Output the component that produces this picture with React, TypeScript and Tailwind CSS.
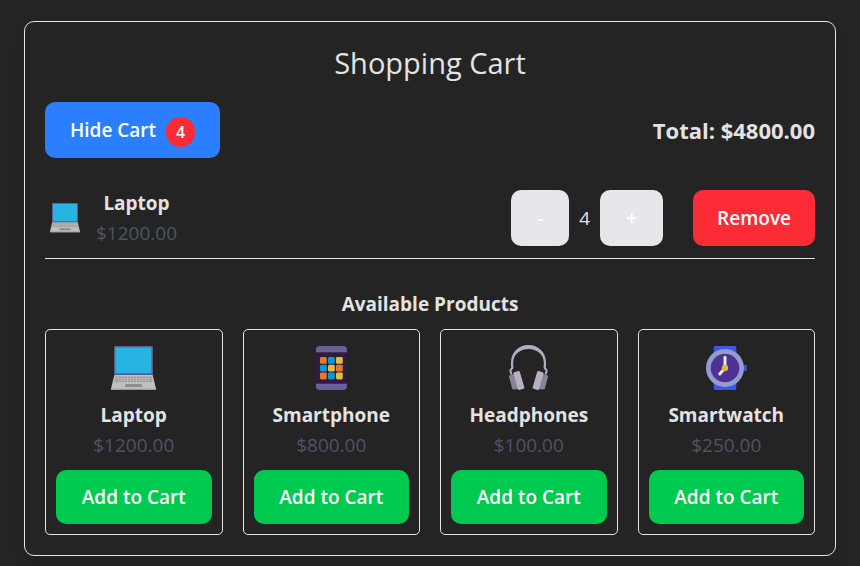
import { useState } from "react";

type IconProps = { className?: string };

function LaptopIcon({ className }: IconProps) {
  return (
    <svg viewBox="0 0 45 44" className={className} aria-hidden="true">
      <rect x="3" y="0" width="39" height="29" rx="1" fill="#635994" />
      <rect x="4.4" y="1.4" width="36" height="25.8" fill="#28b4e2" />
      <path d="M3.4 29h38.2L45 42.6V43a1 1 0 0 1-1 1H1a1 1 0 0 1-1-1v-.4z" fill="#bebebe" />
      <path d="M0 42.7h45V43a1 1 0 0 1-1 1H1a1 1 0 0 1-1-1z" fill="#9b9b9b" />
      <path d="M4.5 30.4h36l1 5.6h-38z" fill="#9b9b9b" />
      <path
        d="M7.5 30.4v5.6M10.5 30.4v5.6M13.5 30.4v5.6M16.5 30.4v5.6M19.5 30.4v5.6M22.5 30.4v5.6M25.5 30.4v5.6M28.5 30.4v5.6M31.5 30.4v5.6M34.5 30.4v5.6M37.5 30.4v5.6M4 32.3h37M4 34.2h37"
        stroke="#bebebe"
        strokeWidth=".7"
      />
      <path d="M14.6 38h15.8l.6 3H14z" fill="#8d8d8d" />
    </svg>
  );
}

const appTiles = [
  ["#e8762c", "#0899d8", "#e2be3a"],
  ["#0899d8", "#e2be3a", "#e8762c"],
  ["#e8762c", "#0899d8", "#e2be3a"],
];

function PhoneIcon({ className }: IconProps) {
  return (
    <svg viewBox="0 0 31 44" className={className} aria-hidden="true">
      <rect width="31" height="44" rx="4" fill="#6b6098" />
      <rect y="6.3" width="31" height="31.4" fill="#321b41" />
      {appTiles.map((row, r) =>
        row.map((fill, c) => (
          <rect key={`${r}-${c}`} x={4 + c * 8} y={11 + r * 7.8} width="6.8" height="6.8" rx="1.4" fill={fill} />
        )),
      )}
    </svg>
  );
}

function HeadphonesIcon({ className }: IconProps) {
  return (
    <svg viewBox="0 0 39 45" className={className} aria-hidden="true">
      <path
        d="M2 22V17.5C2 7.5 9.5 0 19.5 0S37 7.5 37 17.5V22l-2.2 1V17.5C34.8 9.6 28 4 19.5 4S4.2 9.6 4.2 17.5V23z"
        fill="#b4acbc"
      />
      <path
        d="M3.2 20v3.2l-1.7 1.900c-.6 1 .7 2 .9 4.500M35.800 20v3.200l1.700 1.900c.6 1-.7 2-.9 4.500"
        fill="none"
        stroke="#b4acbc"
        strokeWidth="2"
      />
      <path
        d="M.9 30.3 6 28.7l4 15.3-5.500.6a1.300 1.300 0 0 1-1.300-.8L.1 32a1.300 1.300 0 0 1 .8-1.700zM38.100 30.300 33 28.700l-4 15.300 5.500.6a1.300 1.300 0 0 0 1.300-.8L38.900 32a1.300 1.300 0 0 0-.8-1.700z"
        fill="#8c8098"
      />
      <path
        d="m5.4 27.3 4-1.200a1.300 1.300 0 0 1 1.500.9l4.400 15.300a1.300 1.300 0 0 1-.9 1.500l-4 1.100a1.300 1.300 0 0 1-1.500-.9L4.500 28.800a1.300 1.300 0 0 1 .9-1.500zM33.600 27.300l-4-1.200a1.300 1.300 0 0 0-1.500.9l-4.400 15.300a1.300 1.300 0 0 0 .9 1.500l4 1.100a1.300 1.300 0 0 0 1.500-.9l4.400-15.200a1.300 1.300 0 0 0-.9-1.500z"
        fill="#b8afc0"
      />
    </svg>
  );
}

function WatchIcon({ className }: IconProps) {
  return (
    <svg viewBox="0 0 41 44" className={className} aria-hidden="true">
      <rect x="36" y="19" width="4.7" height="6" rx="1.3" fill="#3d55dc" />
      <rect x="7.7" width="22.6" height="44" rx="1.3" fill="#3d5ae4" />
      <circle cx="19" cy="22" r="19" fill="#949bd2" />
      <circle cx="19" cy="22" r="14.3" fill="#4b3293" />
      <path d="M19 11.3V22l-5.2 6" fill="none" stroke="#ececf0" strokeWidth="3" strokeLinecap="round" />
      <circle cx="19" cy="22" r="3.2" fill="#e2b93a" />
    </svg>
  );
}

const products = [
  { name: "Laptop", price: 1200, Icon: LaptopIcon, size: "w-[45px]" },
  { name: "Smartphone", price: 800, Icon: PhoneIcon, size: "w-[31px]" },
  { name: "Headphones", price: 100, Icon: HeadphonesIcon, size: "w-[39px]" },
  { name: "Smartwatch", price: 250, Icon: WatchIcon, size: "w-[41px]" },
];

const money = (n: number) => `$${n.toFixed(2)}`;

export default function App() {
  const [cart, setCart] = useState<Record<string, number>>({ Laptop: 4 });
  const [open, setOpen] = useState(true);

  const change = (name: string, by: number) =>
    setCart((c) => ({ ...c, [name]: Math.max(0, (c[name] ?? 0) + by) }));

  const lines = products.filter((p) => (cart[p.name] ?? 0) > 0);
  const count = lines.reduce((sum, p) => sum + cart[p.name], 0);
  const total = lines.reduce((sum, p) => sum + cart[p.name] * p.price, 0);

  return (
    <div className="min-h-screen bg-[#242424] px-6 pt-[21px] pb-2.5 font-['Open_Sans',sans-serif] text-[19px] leading-[30px] text-[#e3e3e3]">
      <main className="rounded-[10px] border border-[#e3e3e3] p-5 text-center shadow-lg">
        <h1 className="mb-[18px] text-[29px] leading-[42px]">Shopping Cart</h1>

        <div className="flex items-center justify-between">
          <button
            type="button"
            onClick={() => setOpen(!open)}
            className="flex h-14 items-center gap-2.5 rounded-[10px] bg-[#2b7fff] px-[25px] font-semibold text-white"
          >
            {open ? "Hide Cart" : "Show Cart"}
            <span className="mt-1 flex h-[30px] w-[29px] items-center justify-center rounded-full bg-[#fb2c36] text-base">
              {count}
            </span>
          </button>
          <p className="text-[22px] font-bold">Total: {money(total)}</p>
        </div>

        {open && (
          <ul className="mt-5">
            {lines.map(({ name, price, Icon }) => (
              <li key={name} className="flex items-center justify-between border-b border-[#e3e3e3] py-2.5">
                <div className="flex items-center gap-4">
                  <Icon className="ml-[5px] w-[30px]" />
                  <div>
                    <h2 className="font-bold">{name}</h2>
                    <p className="text-[#4a5565]">{money(price)}</p>
                  </div>
                </div>
                <div className="flex items-center">
                  <button
                    type="button"
                    aria-label={`Remove one ${name}`}
                    onClick={() => change(name, -1)}
                    className="h-14 w-[58px] rounded-[10px] bg-gray-200 font-semibold text-white"
                  >
                    -
                  </button>
                  <span className="mx-2.5">{cart[name]}</span>
                  <button
                    type="button"
                    aria-label={`Add one ${name}`}
                    onClick={() => change(name, 1)}
                    className="h-14 w-[63px] rounded-[10px] bg-gray-200 font-semibold text-white"
                  >
                    +
                  </button>
                  <button
                    type="button"
                    onClick={() => change(name, -cart[name])}
                    className="ml-[30px] h-14 rounded-[10px] bg-[#fb2c36] px-6 font-semibold text-white"
                  >
                    Remove
                  </button>
                </div>
              </li>
            ))}
          </ul>
        )}

        <h2 className="mt-[30px] mb-2.5 font-bold">Available Products</h2>
        <div className="grid grid-cols-4 gap-5">
          {products.map(({ name, price, Icon, size }) => (
            <article key={name} className="rounded-[5px] border border-[#e3e3e3] p-2.5">
              <div className="mb-2.5 flex h-[50px] items-end justify-center">
                <Icon className={size} />
              </div>
              <h3 className="font-bold">{name}</h3>
              <p className="text-[#4a5565]">{money(price)}</p>
              <button
                type="button"
                onClick={() => change(name, 1)}
                className="mt-2.5 h-[54px] w-full rounded-[10px] bg-[#00c950] font-semibold text-white"
              >
                Add to Cart
              </button>
            </article>
          ))}
        </div>
      </main>
    </div>
  );
}
